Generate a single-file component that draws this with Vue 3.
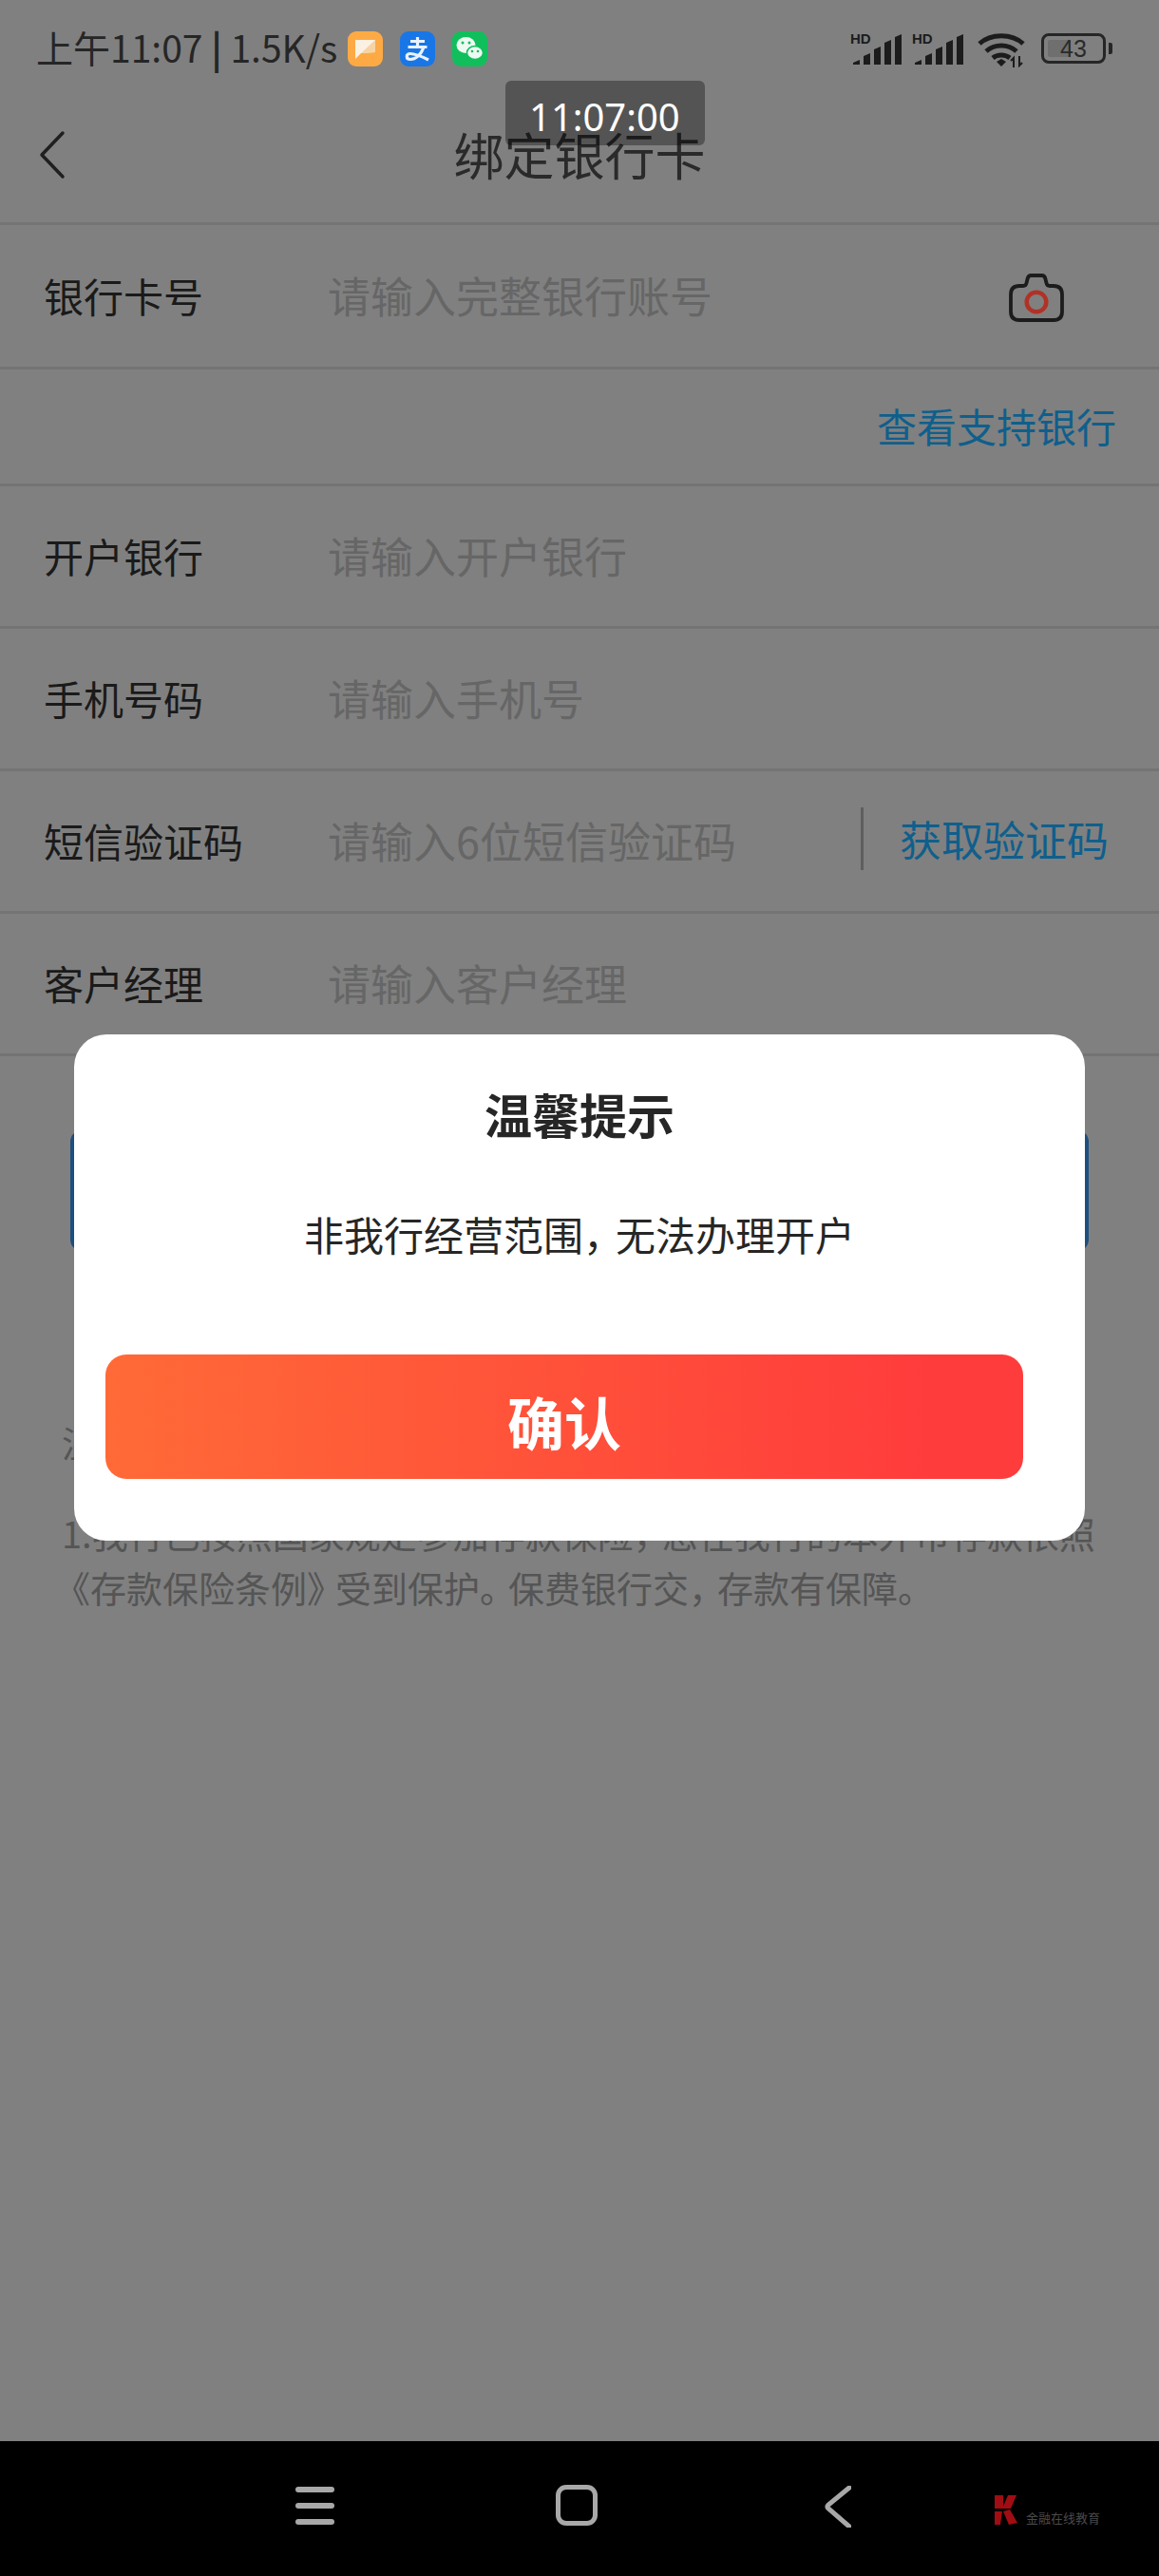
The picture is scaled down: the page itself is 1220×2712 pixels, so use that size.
<template>
  <div class="page">
    <div class="status-bar">
      <div class="status-left">
        <span class="status-text">上午11:07 <b class="pipe">|</b> 1.5K/s</span>
        <svg class="app-icon" viewBox="0 0 37 37">
          <rect width="37" height="37" rx="9" fill="#fdaa45" />
          <path d="M8 9h21v13l-15 1-6 6z" fill="#fbf1e2" />
          <path d="M29 9v13l-15 1z" fill="#f6d3a4" />
        </svg>
        <svg class="app-icon" viewBox="0 0 37 37">
          <rect width="37" height="37" rx="9" fill="#1976e6" />
          <path d="M11 10.500h15M18.500 6v10M8.500 16.500h20M25 16.500c-3 9-9 13-14 13-5 0-5-6 0-6 5 0 12 3 19 6.500" fill="none" stroke="#e8f2fc" stroke-width="3.200" />
        </svg>
        <svg class="app-icon" viewBox="0 0 37 37">
          <rect width="37" height="37" rx="9" fill="#10bf5c" />
          <ellipse cx="14.500" cy="14.500" rx="10" ry="8.500" fill="#eef9f2" />
          <ellipse cx="24" cy="22.500" rx="8.500" ry="7" fill="#eef9f2" stroke="#10bf5c" stroke-width="1.500" />
          <circle cx="11" cy="12" r="1.500" fill="#10bf5c" />
          <circle cx="18" cy="12" r="1.500" fill="#10bf5c" />
          <circle cx="21" cy="21" r="1.300" fill="#10bf5c" />
          <circle cx="27" cy="21" r="1.300" fill="#10bf5c" />
        </svg>
      </div>
      <div class="status-right">
        <svg v-for="n in 2" :key="n" class="signal" viewBox="0 0 55 37">
          <text x="0" y="13" class="hd">HD</text>
          <path :d="signalBars" fill="#1c1c1c" />
        </svg>
        <svg class="wifi" viewBox="0 0 50 38">
          <path d="M2 13C14 2 36 2 48 13M9 21c9-8 23-8 32 0M16 28c5-4 13-4 18 0" fill="none" stroke="#1c1c1c" stroke-width="5" />
          <path d="M20 32l5-3 5 3-5 5z" fill="#1c1c1c" />
          <path d="M38 38V28l-3 3M44 26v10l3-3" fill="none" stroke="#1c1c1c" stroke-width="2" />
        </svg>
        <div class="battery">
          <div class="battery-body">
            <div class="battery-fill"></div>
            <span class="battery-num">43</span>
          </div>
          <div class="battery-nub"></div>
        </div>
      </div>
    </div>

    <div class="nav">
      <svg class="back" viewBox="0 0 30 52">
        <path d="M27 3L5 26l22 23" fill="none" stroke="#1f1f1f" stroke-width="3.500" stroke-linecap="round" stroke-linejoin="round" />
      </svg>
      <span class="nav-title">绑定银行卡</span>
      <div class="toast">11:07:00</div>
    </div>

    <div class="row row-card">
      <span class="label">银行卡号</span>
      <span class="placeholder">请输入完整银行账号</span>
      <svg class="camera" viewBox="0 0 58 51">
        <path d="M2 22q0-9 9-9h4q3 0 3.500-3l1-4q.5-4 4-4h11q3.500 0 4 4l1 4q.5 3 3.500 3h4q9 0 9 9v18q0 9-9 9H11q-9 0-9-9z" fill="none" stroke="#1c1c1c" stroke-width="3.800" />
        <circle cx="29" cy="30" r="10.300" fill="none" stroke="#b03226" stroke-width="4.500" />
      </svg>
    </div>
    <div class="row-link">
      <span class="link link-support">查看支持银行</span>
    </div>
    <div class="row">
      <span class="label">开户银行</span>
      <span class="placeholder">请输入开户银行</span>
    </div>
    <div class="row">
      <span class="label">手机号码</span>
      <span class="placeholder">请输入手机号</span>
    </div>
    <div class="row">
      <span class="label">短信验证码</span>
      <span class="placeholder">请输入6位短信验证码</span>
      <div class="sms">
        <span class="link link-sms">获取验证码</span>
      </div>
    </div>
    <div class="row">
      <span class="label">客户经理</span>
      <span class="placeholder">请输入客户经理</span>
    </div>

    <div class="submit-behind"></div>

    <div class="notes">
      <div class="notes-title">温馨提示</div>
      <p class="notes-text">1.我行已按照国家规定参加存款保险<span class="punct">，</span>您在我行的本外币存款依照<span class="punct-open">《</span>存款保险条例<span class="punct">》</span>受到保护<span class="punct">。</span>保费银行交<span class="punct">，</span>存款有保障。</p>
    </div>

    <div class="modal">
      <div class="modal-title">温馨提示</div>
      <div class="modal-msg">非我行经营范围<span class="punct">，</span>无法办理开户</div>
      <div class="modal-btn">确认</div>
    </div>

    <div class="bottom-nav">
      <div class="menu-icon"><i></i><i></i><i></i></div>
      <div class="home-icon"></div>
      <svg class="nav-back" viewBox="0 0 28 44">
        <path d="M26 2L4 20q-2 2 0 4l22 19" fill="none" stroke="#a8a8a8" stroke-width="5" stroke-linecap="round" />
      </svg>
      <div class="watermark">
        <svg class="wm-logo" viewBox="0 0 27 31">
          <path d="M2 0h9v14H2zM16 0h9l-6 14h-9zM2 17h8l-2 14H2zM11 17l7-2 8 14-9 2z" fill="#a00d12" />
        </svg>
        <span class="wm-text">金融在线教育</span>
      </div>
    </div>
  </div>
</template>

<script setup>
// five signal bars, each with a slanted top
const signalBars = [
  [3, 30],
  [14, 23],
  [25, 16],
  [36, 9],
  [47, 3],
]
  .map(([x, top]) => `M${x} 35V${top + 3}L${x + 7} ${top}V35z`)
  .join('')
</script>

<style>
html,
body {
  margin: 0;
  background: #808080;
}
</style>

<style scoped>
.page {
  position: relative;
  width: 1220px;
  height: 2712px;
  overflow: hidden;
  background: #808080;
  font-family: "Noto Sans CJK SC", "Noto Sans", sans-serif;
  color: #1c1c1c;
}

.status-bar {
  height: 100px;
  padding: 0 49px 0 38px;
  box-sizing: border-box;
  display: flex;
  justify-content: space-between;
  align-items: flex-start;
}

.status-left {
  display: flex;
  align-items: center;
  height: 104px;
}

.status-text {
  font-size: 39px;
  color: #262626;
  width: 328px;
  margin-top: -6px;
  white-space: nowrap;
}

.pipe {
  font-weight: 700;
}

.app-icon {
  width: 37px;
  height: 37px;
  margin-right: 18px;
  margin-top: -1px;
}

.status-right {
  display: flex;
  align-items: flex-start;
  padding-top: 33px;
}

.signal {
  width: 55px;
  height: 37px;
  margin-right: 10px;
}

.hd {
  font-family: "Liberation Sans", sans-serif;
  font-size: 15px;
  font-weight: 700;
  fill: #1c1c1c;
}

.wifi {
  width: 50px;
  height: 38px;
  margin: 0 17px 0 4px;
}

.battery {
  display: flex;
  align-items: center;
  height: 36px;
  gap: 3px;
}

.battery-body {
  position: relative;
  width: 68px;
  height: 32px;
  box-sizing: border-box;
  border: 3px solid #262626;
  border-radius: 8px;
  display: flex;
  align-items: center;
  justify-content: center;
}

.battery-fill {
  position: absolute;
  left: 4px;
  top: 4px;
  bottom: 4px;
  width: 24px;
  border-radius: 2px;
  background: #6f6f6f;
}

.battery-num {
  position: relative;
  font-family: "Liberation Sans", sans-serif;
  font-size: 25px;
  color: #2a2a2a;
}

.battery-nub {
  width: 4px;
  height: 12px;
  border-radius: 0 2px 2px 0;
  background: #262626;
}

.nav {
  position: relative;
  height: 134px;
  border-bottom: 3px solid #747474;
  display: flex;
  align-items: center;
  justify-content: center;
}

.back {
  position: absolute;
  left: 39px;
  top: 37px;
  width: 30px;
  height: 52px;
}

.nav-title {
  font-size: 53px;
  color: #2a2a2a;
  margin-top: -11px;
}

.toast {
  position: absolute;
  left: 532px;
  top: -15px;
  width: 210px;
  height: 68px;
  box-sizing: border-box;
  padding-left: 25px;
  border-radius: 6px;
  background: rgba(0, 0, 0, 0.34);
  color: #fff;
  font-family: "Noto Sans", sans-serif;
  font-size: 40px;
  line-height: 76px;
}

.row {
  position: relative;
  box-sizing: border-box;
  height: 150px;
  padding: 0 0 3px 46px;
  border-bottom: 3px solid #747474;
  display: flex;
  align-items: center;
}

.row-card {
  height: 152px;
  padding-bottom: 2px;
}

.label {
  width: 299px;
  flex-shrink: 0;
  font-size: 42px;
  color: #1a1a1a;
}

.placeholder {
  font-size: 45px;
  color: #666;
}

.camera {
  position: absolute;
  left: 1062px;
  top: 51px;
  width: 58px;
  height: 51px;
}

.row-link {
  box-sizing: border-box;
  height: 123px;
  padding: 0 45px 4px 0;
  border-bottom: 3px solid #747474;
  display: flex;
  align-items: center;
  justify-content: flex-end;
}

.link {
  color: #0f5f8c;
}

.link-support {
  font-size: 42px;
}

.sms {
  position: absolute;
  left: 906px;
  top: 38px;
  height: 66px;
  border-left: 3px solid #5e5e5e;
  padding-left: 38px;
  display: flex;
  align-items: center;
}

.link-sms {
  font-size: 44px;
  white-space: nowrap;
}

.submit-behind {
  height: 127px;
  margin: 78px 74px 0;
  background: #1d4f80;
  border-radius: 12px;
}

.notes {
  margin: 0 54px 0 65px;
  padding-top: 174px;
  color: #555;
  font-size: 38px;
}

.notes-title {
  line-height: 54px;
}

.notes-text {
  margin: 40px 0 0;
  line-height: 57px;
}

/* the device font sets punctuation narrower than a full em */
.punct {
  letter-spacing: -8px;
}

.punct-open {
  margin-left: -8px;
}

.modal {
  position: absolute;
  left: 78px;
  top: 1089px;
  width: 1064px;
  height: 533px;
  padding: 0 65px 0 33px;
  box-sizing: border-box;
  border-radius: 34px;
  background: #fff;
}

.modal-title {
  padding: 49px 0 0 32px;
  text-align: center;
  font-size: 50px;
  font-weight: 700;
  line-height: 68px;
  color: #262626;
}

.modal-msg {
  margin-top: 63px;
  padding-left: 32px;
  text-align: center;
  font-size: 42px;
  line-height: 60px;
  color: #262626;
}

.modal-btn {
  margin-top: 97px;
  height: 131px;
  border-radius: 22px;
  background: linear-gradient(90deg, #ff6a37, #ff3c3c 90%);
  color: #fff;
  font-size: 60px;
  font-weight: 700;
  text-align: center;
  line-height: 140px;
}

.bottom-nav {
  position: absolute;
  left: 0;
  right: 0;
  bottom: 0;
  height: 142px;
  background: #000;
}

.menu-icon {
  position: absolute;
  left: 311px;
  top: 48px;
  width: 41px;
  display: flex;
  flex-direction: column;
  gap: 11px;
}

.menu-icon i {
  display: block;
  height: 6px;
  border-radius: 3px;
  background: #a8a8a8;
}

.home-icon {
  position: absolute;
  left: 585px;
  top: 46px;
  width: 44px;
  height: 43px;
  box-sizing: border-box;
  border: 5px solid #a8a8a8;
  border-radius: 11px;
}

.nav-back {
  position: absolute;
  left: 868px;
  top: 47px;
  width: 28px;
  height: 44px;
}

.watermark {
  position: absolute;
  left: 1045px;
  top: 57px;
  display: flex;
  align-items: flex-end;
  gap: 8px;
}

.wm-logo {
  width: 27px;
  height: 31px;
}

.wm-text {
  font-size: 13px;
  line-height: 14px;
  color: #4a4a4a;
}
</style>
